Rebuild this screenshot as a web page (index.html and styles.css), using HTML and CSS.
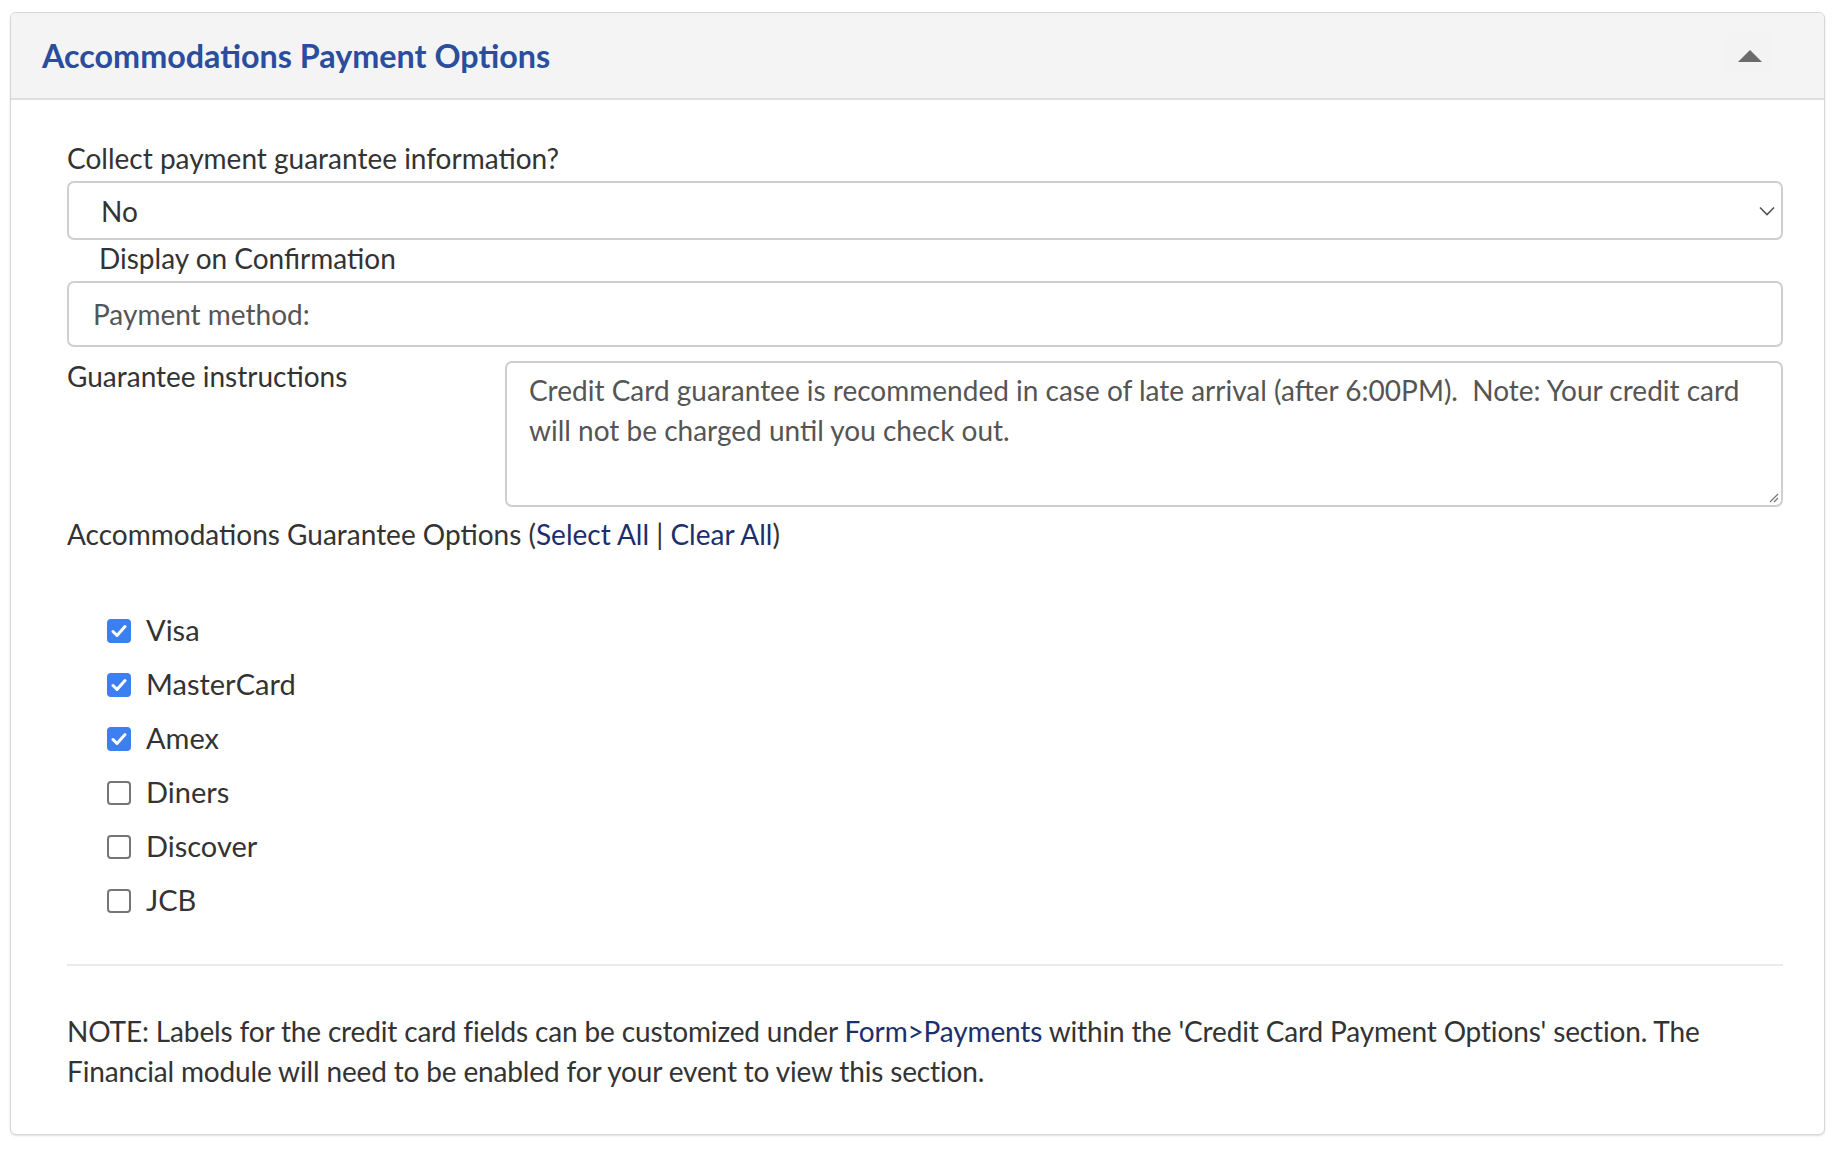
FILE: index.html
```html
<!DOCTYPE html>
<html lang="en">
<head>
<meta charset="utf-8">
<title>Accommodations Payment Options</title>
<link rel="stylesheet" href="styles.css">
</head>
<body>
<div class="page">
  <section class="panel">
    <header class="panel-head">
      <h2 class="panel-title">Accommodations Payment Options</h2>
      <button class="collapse-btn" type="button" aria-label="Collapse"><span class="caret-up"></span></button>
    </header>
    <div class="panel-body">
      <label class="field-label">Collect payment guarantee information?</label>
      <div class="select">
        <span class="select-value">No</span>
        <svg class="select-chevron" width="16" height="10" viewBox="0 0 16 10"><path d="M1 1.5 L8 8.5 L15 1.5" fill="none" stroke="#555" stroke-width="1.6"/></svg>
      </div>
      <div class="sub-label">Display on Confirmation</div>
      <div class="text-input">Payment method:</div>
      <div class="instr-row">
        <div class="instr-label">Guarantee instructions</div>
        <div class="textarea">Credit Card guarantee is recommended in case of late arrival (after 6:00PM).&nbsp; Note: Your credit card will not be charged until you check out.
          <svg class="resize-grip" width="12" height="12" viewBox="0 0 12 12"><path d="M11 3 L3 11 M11 7 L7 11" stroke="#777" stroke-width="1.2" fill="none"/></svg>
        </div>
      </div>
      <div class="options-title">Accommodations Guarantee Options (<a class="link" href="#">Select All</a> | <a class="link" href="#">Clear All</a>)</div>
      <ul class="check-list">
        <li class="check-row"><span class="box checked"><svg width="16" height="14" viewBox="0 0 16 14"><path d="M2 7.5 L6 11.5 L14 2.5" fill="none" stroke="#fff" stroke-width="3" stroke-linecap="round" stroke-linejoin="round"/></svg></span><span class="check-text">Visa</span></li>
        <li class="check-row"><span class="box checked"><svg width="16" height="14" viewBox="0 0 16 14"><path d="M2 7.5 L6 11.5 L14 2.5" fill="none" stroke="#fff" stroke-width="3" stroke-linecap="round" stroke-linejoin="round"/></svg></span><span class="check-text">MasterCard</span></li>
        <li class="check-row"><span class="box checked"><svg width="16" height="14" viewBox="0 0 16 14"><path d="M2 7.5 L6 11.5 L14 2.5" fill="none" stroke="#fff" stroke-width="3" stroke-linecap="round" stroke-linejoin="round"/></svg></span><span class="check-text">Amex</span></li>
        <li class="check-row"><span class="box"></span><span class="check-text">Diners</span></li>
        <li class="check-row"><span class="box"></span><span class="check-text">Discover</span></li>
        <li class="check-row"><span class="box"></span><span class="check-text">JCB</span></li>
      </ul>
      <hr class="divider">
      <p class="note">NOTE: Labels for the credit card fields can be customized under <a class="link" href="#">Form&gt;Payments</a> within the 'Credit Card Payment Options' section. The Financial module will need to be enabled for your event to view this section.</p>
    </div>
  </section>
</div>
</body>
</html>
```

FILE: styles.css
```css
* { box-sizing: border-box; }
html, body { margin: 0; padding: 0; background: #fff; }
body {
  font-family: Lato, "Open Sans", "Liberation Sans", sans-serif;
  color: #333;
  font-size: 28px;
}
.page { padding: 12px 13px 14px 10px; }
.panel {
  border: 1px solid #d6d6d6;
  border-radius: 6px;
  box-shadow: 0 1px 2px rgba(0,0,0,0.12);
  background: #fff;
  overflow: hidden;
}
.panel-head {
  background: #f4f4f4;
  border-bottom: 2px solid #dedede;
  height: 87px;
  display: flex;
  align-items: center;
  justify-content: space-between;
  padding: 0 50px 0 31px;
}
.panel-title {
  margin: 0;
  font-size: 32.3px;
  font-weight: 700;
  color: #2a4d9e;
}
.collapse-btn {
  width: 48px;
  height: 47px;
  border: 0;
  border-radius: 4px;
  background: #f3f3f3;
  display: flex;
  align-items: center;
  justify-content: center;
  padding: 0;
}
.caret-up {
  width: 0; height: 0;
  border-left: 12px solid transparent;
  border-right: 12px solid transparent;
  border-bottom: 12px solid #6b6b6b;
}
.panel-body { padding: 38px 41px 43px 56px; }
.field-label { display: block; line-height: 40px; margin-bottom: 3px; }
.select {
  height: 59px;
  border: 2px solid #cfcfcf;
  border-radius: 7px;
  display: flex;
  align-items: center;
  justify-content: space-between;
  padding: 0 6px 0 32px;
  color: #333;
}
.sub-label { line-height: 40px; padding-left: 32px; margin-top: -2px; margin-bottom: 3px; }
.text-input {
  height: 66px;
  border: 2px solid #cfcfcf;
  border-radius: 7px;
  display: flex;
  align-items: center;
  padding-left: 24px;
  color: #555;
}
.instr-row {
  display: grid;
  grid-template-columns: 438px 1fr;
  margin-top: 14px;
}
.instr-label { line-height: 30px; }
.textarea {
  position: relative;
  height: 146px;
  border: 2px solid #cfcfcf;
  border-radius: 7px;
  padding: 7px 24px 0 22px;
  line-height: 40px;
  color: #555;
}
.resize-grip { position: absolute; right: 2px; bottom: 2px; }
.options-title { line-height: 40px; margin-top: 7px; }
.link { color: #1b2f6b; text-decoration: none; }
.check-list { list-style: none; margin: 48px 0 0; padding: 0 0 0 40px; }
.check-row { height: 54px; display: flex; align-items: center; gap: 15px; font-size: 29px; }
.box {
  width: 24px; height: 24px;
  border: 2px solid #767676;
  border-radius: 4px;
  display: flex; align-items: center; justify-content: center;
  margin-top: 3px;
}
.box.checked { background: #3b7ff1; border-color: #3b7ff1; }
.divider { border: 0; border-top: 2px solid #ebebeb; margin: 38px 0 0; }
.note { margin: 45px 0 0; line-height: 40px; letter-spacing: -0.15px; }
```
